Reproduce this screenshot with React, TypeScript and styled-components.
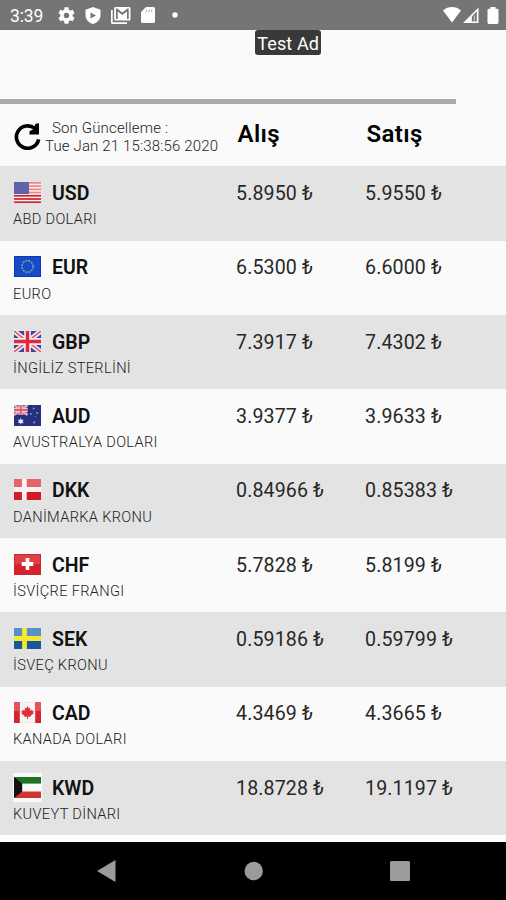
import React from "react";
import styled, { createGlobalStyle } from "styled-components";

const GlobalStyle = createGlobalStyle`
  * { box-sizing: border-box; }
  html, body { margin: 0; padding: 0; background: #fafafa; }
  body { font-family: Roboto, "Liberation Sans", sans-serif; color: #111; overflow: hidden; }
  svg { display: block; }
`;

const Screen = styled.div`
  width: 506px;
  height: 900px;
  display: flex;
  flex-direction: column;
  background: #fafafa;
  overflow: hidden;
`;

const StatusBar = styled.header`
  height: 30px;
  flex: none;
  display: flex;
  align-items: center;
  justify-content: space-between;
  padding: 0 7px 0 10px;
  background: #757575;
  color: #fff;
`;

const Clock = styled.span`
  width: 48px;
  font-size: 17.5px;
  line-height: 30px;
  padding-top: 2px;
  letter-spacing: -0.1px;
`;

const StatusGroup = styled.div`
  display: flex;
  align-items: center;
`;

const StatusIcon = styled.svg<{ $gap?: number }>`
  flex: none;
  fill: #fff;
  margin-right: ${(p) => p.$gap ?? 0}px;
`;

const AdSlot = styled.section`
  height: 68.5px;
  flex: none;
  padding-left: 255px;
`;

const AdLabel = styled.span`
  display: block;
  width: 66.4px;
  height: 25px;
  border-radius: 3px;
  background: #393939;
  color: #fff;
  font-size: 18px;
  letter-spacing: 0.1px;
  line-height: 27px;
  text-align: center;
  white-space: nowrap;
`;

const Divider = styled.div`
  width: 456.4px;
  height: 5px;
  flex: none;
  background: #aaa;
`;

const columns = "236px 129px 1fr";

const TableHead = styled.div`
  height: 62.9px;
  flex: none;
  display: grid;
  grid-template-columns: ${columns};
`;

const Updated = styled.div`
  display: flex;
  padding: 15px 0 0 13px;
`;

const UpdatedText = styled.div`
  margin: 0 0 0 4px;
  font-size: 15px;
  line-height: 18px;
  letter-spacing: 0.15px;
  font-weight: 300;
  color: #222;
  white-space: nowrap;
`;

const UpdatedLabel = styled.div`
  padding-left: 7px;
`;

const RefreshIcon = styled.svg`
  margin-top: 3px;
  flex: none;
`;

const ColumnTitle = styled.div`
  padding: 15.5px 0 0 1.5px;
  font-size: 24px;
  line-height: 30px;
  letter-spacing: 0.4px;
  font-weight: 600;
  color: #000;
`;

const Row = styled.div<{ $shaded: boolean }>`
  height: 74.33px;
  flex: none;
  display: grid;
  grid-template-columns: ${columns};
  background: ${(p) => (p.$shaded ? "#e3e3e3" : "#fafafa")};
`;

const Currency = styled.div`
  padding: 13px 0 0 13px;
`;

const CodeLine = styled.div`
  display: flex;
  align-items: center;
  height: 26px;
  gap: 10px;
  padding-left: 1px;
`;

const FlagFrame = styled.div<{ $framed: boolean }>`
  width: 27px;
  height: ${(p) => (p.$framed ? 29 : 21)}px;
  padding: ${(p) => (p.$framed ? "4px 0" : "0")};
  background: ${(p) => (p.$framed ? "#f8f8f8" : "transparent")};
  box-shadow: ${(p) => (p.$framed ? "1px 0 #f8f8f8, -1px 0 #f8f8f8" : "none")};
`;

const Code = styled.span`
  font-size: 19.5px;
  line-height: 26px;
  font-weight: 600;
  padding: 3px 0 0 1px;
`;

const Name = styled.div`
  font-size: 14.6px;
  line-height: 20px;
  letter-spacing: 0.33px;
  font-weight: 300;
  padding-top: 3.8px;
  color: #222;
  white-space: nowrap;
`;

const Price = styled.div`
  padding-top: 14.7px;
  font-size: 19.6px;
  line-height: 26px;
  letter-spacing: 0.12px;
  font-weight: 400;
  color: #282828;
  white-space: nowrap;
`;

const Footer = styled.div`
  flex: 1;
  background: #fdfdfd;
`;

const NavBar = styled.nav`
  height: 58px;
  flex: none;
  display: flex;
  align-items: center;
  padding-left: 96.500px;
  gap: 127px;
  background: #000;
`;

const stripes = Array.from({ length: 7 }, (_, i) => i);

function Flag({ code }: { code: string }) {
  const common = {
    width: 27,
    height: 21,
    viewBox: "0 0 28 21",
    preserveAspectRatio: "none",
  };
  switch (code) {
    case "USD":
      return (
        <svg {...common}>
          <rect width="28" height="21" fill="#f8eeee" />
          {stripes.map((i) => (
            <rect key={i} y={i * 3.23} width="28" height="1.7" fill={i < 4 ? "#ef858b" : "#cf1f32"} />
          ))}
          <rect width="15.5" height="12" fill="#5c62aa" />
          <path d="M2 2h12M1 4.5h12M2 7h12M1 9.5h12" stroke="#7377b8" strokeWidth=".9" strokeDasharray="1 1.5" />
        </svg>
      );
    case "EUR":
      return (
        <svg {...common}>
          <rect width="28" height="21" fill="#1749c8" />
          <rect x=".5" y=".5" width="27" height="20" fill="none" stroke="#083bb0" />
          <circle cx="14" cy="10.5" r="5.8" fill="none" stroke="#5f9fa5" strokeWidth="1.8" strokeDasharray="2.1 .94" />
        </svg>
      );
    case "GBP":
      return (
        <svg {...common}>
          <rect width="28" height="21" fill="#34499a" />
          <path d="M0 0l28 21M28 0L0 21" stroke="#f4e9ee" strokeWidth="5" />
          <path d="M0 0l28 21M28 0L0 21" stroke="#dc5b6b" strokeWidth="1.6" />
          <path d="M14 0v21M0 10.5h28" stroke="#fae9eb" strokeWidth="7" />
          <path d="M14 0v21M0 10.5h28" stroke="#df2941" strokeWidth="3.6" />
        </svg>
      );
    case "AUD":
      return (
        <svg {...common}>
          <rect width="28" height="21" fill="#25307f" />
          <rect width="14" height="10" fill="#6369a7" />
          <path d="M0 0l14 10M14 0L0 10" stroke="#e9a9b8" strokeWidth="2.4" />
          <path d="M7 0v10M0 5h14" stroke="#f4c4cc" strokeWidth="4" />
          <path d="M7 0v10M0 5h14" stroke="#e35b70" strokeWidth="2" />
          <path d="M7 12.8l.9 2.1 2.2-.5-1.2 1.9 1.2 1.9-2.2-.5L7 19.8l-.9-2.1-2.2.5 1.2-1.9-1.2-1.9 2.2.5z" fill="#e3edff" />
          <g fill="#8f98d2">
            <circle cx="20.5" cy="3.5" r="1" />
            <circle cx="17.5" cy="9" r="1" />
            <circle cx="24" cy="8" r="1" />
            <circle cx="21" cy="17.5" r="1.1" />
            <circle cx="22.5" cy="11.5" r=".6" />
          </g>
        </svg>
      );
    case "DKK":
      return (
        <svg {...common}>
          <rect width="28" height="21" fill="#cf1c25" />
          <rect width="28" height="9" fill="#e2656c" />
          <path d="M10.7 0v21M0 10.5h28" stroke="#fff3f2" strokeWidth="5" />
        </svg>
      );
    case "CHF":
      return (
        <svg {...common}>
          <rect width="28" height="21" fill="#d6202b" />
          <rect width="28" height="10" fill="#de3f47" />
          <rect x=".5" y=".5" width="27" height="20" fill="none" stroke="#cc2a32" />
          <path d="M14 4v12M8 10h12" stroke="#fff" strokeWidth="3.8" />
        </svg>
      );
    case "SEK":
      return (
        <svg {...common}>
          <rect width="28" height="21" fill="#1758a0" />
          <rect width="28" height="9" fill="#5990c5" />
          <path d="M10.9 0v21M0 10.5h28" stroke="#f4e92b" strokeWidth="5" />
        </svg>
      );
    case "CAD":
      return (
        <svg {...common}>
          <rect width="28" height="21" fill="#f7f3f3" />
          <path d="M0 0h6v21H0zM22 0h6v21h-6z" fill="#d8232e" />
          <path d="M0 0h6v9H0zM22 0h6v9h-6z" fill="#e1565d" />
          <path d="M14 4l1.4 2.4 1.6-.7-.6 3.2 1.6-1.3.5 1.1 2-.2-.8 2 .8.7-3.5 2.7.3 1.2-2.8-.5V17h-1v-2.4l-2.8.5.3-1.2-3.5-2.7.8-.7-.8-2 2 .2.5-1.1 1.6 1.3-.6-3.2 1.6.7z" fill="#dc303a" />
          <path d="M6 .25h16M6 20.75h16" stroke="#ddd" strokeWidth=".5" />
        </svg>
      );
    default:
      return (
        <svg {...common}>
          <rect width="28" height="21" fill="#f7faf7" />
          <path d="M0 0h28v6.6H0z" fill="#1d7426" />
          <path d="M0 14.5h28V21H0z" fill="#cf342d" />
          <path d="M0 0l8.5 6.6v7.9L0 21z" fill="#111" />
        </svg>
      );
  }
}

const rates = [
  { code: "USD", name: "ABD DOLARI", buy: "5.8950", sell: "5.9550" },
  { code: "EUR", name: "EURO", buy: "6.5300", sell: "6.6000" },
  { code: "GBP", name: "İNGİLİZ STERLİNİ", buy: "7.3917", sell: "7.4302" },
  { code: "AUD", name: "AVUSTRALYA DOLARI", buy: "3.9377", sell: "3.9633" },
  { code: "DKK", name: "DANİMARKA KRONU", buy: "0.84966", sell: "0.85383" },
  { code: "CHF", name: "İSVİÇRE FRANGI", buy: "5.7828", sell: "5.8199" },
  { code: "SEK", name: "İSVEÇ KRONU", buy: "0.59186", sell: "0.59799" },
  { code: "CAD", name: "KANADA DOLARI", buy: "4.3469", sell: "4.3665" },
  { code: "KWD", name: "KUVEYT DİNARI", buy: "18.8728", sell: "19.1197" },
];

export default function App() {
  return (
    <>
      <GlobalStyle />
      <Screen>
        <StatusBar>
          <StatusGroup>
            <Clock>3:39</Clock>
            <StatusIcon width="17" height="17" viewBox="2 2 20 20" $gap={10}>
              <path d="M19.14 12.94c.04-.3.06-.61.06-.94 0-.32-.02-.64-.07-.94l2.03-1.58a.49.49 0 0 0 .12-.61l-1.92-3.32a.49.49 0 0 0-.59-.22l-2.39.96c-.5-.38-1.03-.7-1.62-.94l-.36-2.54a.48.48 0 0 0-.48-.41h-3.84c-.24 0-.43.17-.47.41l-.36 2.54c-.59.24-1.13.57-1.62.94l-2.39-.96a.48.48 0 0 0-.59.22L2.74 8.87c-.12.21-.08.47.12.61l2.03 1.58c-.05.3-.09.63-.09.94s.02.64.07.94l-2.03 1.58a.49.49 0 0 0-.12.61l1.92 3.32c.12.22.37.29.59.22l2.39-.96c.5.38 1.03.7 1.62.94l.36 2.54c.05.24.24.41.48.41h3.84c.24 0 .44-.17.47-.41l.36-2.54c.59-.24 1.13-.56 1.62-.94l2.39.96c.22.08.47 0 .59-.22l1.92-3.32a.48.48 0 0 0-.12-.61zM12 15.2a3.2 3.2 0 1 1 0-6.4 3.2 3.2 0 0 1 0 6.4z" />
            </StatusIcon>
            <StatusIcon width="16" height="17" viewBox="0 0 16 17" $gap={10}>
              <path fillRule="evenodd" d="M8 0l7.5 2.7v5.7c0 4-3.2 7.2-7.5 8.6C3.7 15.6.5 12.4.5 8.4V2.7zM5.5 5.5v6l5.5-3z" />
            </StatusIcon>
            <StatusIcon width="20" height="17" viewBox="0 0 20 17" $gap={10}>
              <path d="M0 3h1.7v12.3H16V17H1.5A1.5 1.5 0 0 1 0 15.5z" />
              <path fillRule="evenodd" d="M4.5 0h13.7a1.3 1.3 0 0 1 1.3 1.3v11a1.3 1.3 0 0 1-1.3 1.3H4.5a1.3 1.3 0 0 1-1.3-1.3v-11A1.3 1.3 0 0 1 4.5 0zM5 1.5V12h1.7V4.5l4.6 3.4 4.7-3.4V12h1.7V1.5h-1.2l-5.2 3.9-5.1-3.9z" />
            </StatusIcon>
            <StatusIcon width="14" height="16" viewBox="0 0 14 16" $gap={17}>
              <path d="M5 0h7.5A1.5 1.5 0 0 1 14 1.5v13a1.5 1.5 0 0 1-1.5 1.5h-11A1.5 1.5 0 0 1 0 14.5V5z" />
              <path d="M5.5 2.5v2.8M8.1 2.5v2.8M10.7 2.5v2.8" stroke="#b5b5b5" strokeWidth="1.1" />
            </StatusIcon>
            <StatusIcon width="6" height="6" viewBox="0 0 6 6">
              <circle cx="3" cy="3" r="2.7" />
            </StatusIcon>
          </StatusGroup>
          <StatusGroup>
            <StatusIcon width="18" height="16" viewBox="0 0 18 16" $gap={2}>
              <path d="M0 3.5C5-1.1 13-1.1 18 3.5L9 15.5z" />
            </StatusIcon>
            <StatusIcon width="16" height="16" viewBox="0 0 16 16" $gap={8}>
              <path fillRule="evenodd" d="M0 16L15.5.5V16zM8.8 9.5v5h5V4.3z" />
              <path d="M10.8 8.5h1.2v6h-1.2z" fillOpacity=".6" />
            </StatusIcon>
            <StatusIcon width="12" height="17" viewBox="0 0 12 17">
              <path d="M3.5 1.7V0h5v1.7h1.6A1.4 1.4 0 0 1 11.5 3v12.5a1.4 1.4 0 0 1-1.4 1.4H1.9a1.4 1.4 0 0 1-1.4-1.4V3a1.4 1.4 0 0 1 1.4-1.3z" />
            </StatusIcon>
          </StatusGroup>
        </StatusBar>
        <AdSlot>
          <AdLabel>Test Ad</AdLabel>
        </AdSlot>
        <Divider />
        <TableHead>
          <Updated>
            <RefreshIcon width="28" height="28" viewBox="0 0 28 28">
              <path d="M21.8 6.4A11.2 11.2 0 1 0 25.6 17.3" fill="none" stroke="#000" strokeWidth="3.7" />
              <path d="M22.6 1.8L26 1.2V12.5H16.5V9.2L20 7.5z" fill="#000" />
            </RefreshIcon>
            <UpdatedText>
              <UpdatedLabel>Son Güncelleme :</UpdatedLabel>
              <div>Tue Jan 21 15:38:56 2020</div>
            </UpdatedText>
          </Updated>
          <ColumnTitle>Alış</ColumnTitle>
          <ColumnTitle>Satış</ColumnTitle>
        </TableHead>
        {rates.map((rate, i) => (
          <Row key={rate.code} $shaded={i % 2 === 0}>
            <Currency>
              <CodeLine>
                <FlagFrame $framed={rate.code === "KWD"}>
                  <Flag code={rate.code} />
                </FlagFrame>
                <Code>{rate.code}</Code>
              </CodeLine>
              <Name>{rate.name}</Name>
            </Currency>
            <Price>{rate.buy} ₺</Price>
            <Price>{rate.sell} ₺</Price>
          </Row>
        ))}
        <Footer />
        <NavBar>
          <svg width="19" height="22" viewBox="0 0 19 22">
            <path d="M0 11L18.5 0v22z" fill="#9b9b9b" />
          </svg>
          <svg width="20" height="20" viewBox="0 0 20 20">
            <circle cx="10.7" cy="10" r="9.2" fill="#9b9b9b" />
          </svg>
          <svg width="20" height="20" viewBox="0 0 20 20">
            <rect width="20" height="20" rx="1.5" fill="#9b9b9b" />
          </svg>
        </NavBar>
      </Screen>
    </>
  );
}
